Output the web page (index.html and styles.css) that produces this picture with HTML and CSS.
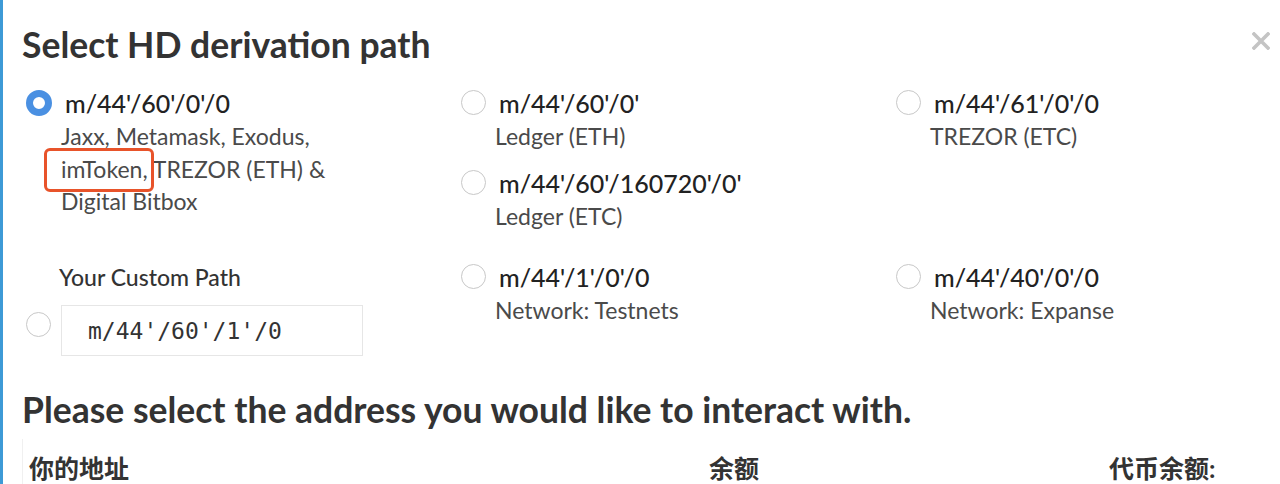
FILE: index.html
```html
<!DOCTYPE html>
<html lang="en">
<head>
    <meta charset="UTF-8">
    <meta name="viewport" content="width=device-width, initial-scale=1.0">
    <title>Select HD derivation path</title>
    <link rel="stylesheet" href="styles.css">
</head>
<body>
    <div class="modal">
        <div class="modal-head">
            <h2>Select HD derivation path</h2>
            <button class="close" aria-label="Close">
                <svg width="18" height="18" viewBox="0 0 18 18">
                    <path d="M2 2 L16 16 M16 2 L2 16" stroke="#c4c4c4" stroke-width="3.6" stroke-linecap="square"/>
                </svg>
            </button>
        </div>

        <div class="paths">
            <div class="cell">
                <label class="option">
                    <span class="radio checked"></span>
                    <span class="text">
                        <span class="path">m/44'/60'/0'/0</span>
                        <span class="desc">Jaxx, Metamask, Exodus, <span class="mark">imToken,</span> TREZOR (ETH) &amp; Digital Bitbox</span>
                    </span>
                </label>
            </div>
            <div class="cell">
                <label class="option">
                    <span class="radio"></span>
                    <span class="text">
                        <span class="path">m/44'/60'/0'</span>
                        <span class="desc">Ledger (ETH)</span>
                    </span>
                </label>
                <label class="option">
                    <span class="radio"></span>
                    <span class="text">
                        <span class="path">m/44'/60'/160720'/0'</span>
                        <span class="desc">Ledger (ETC)</span>
                    </span>
                </label>
            </div>
            <div class="cell">
                <label class="option">
                    <span class="radio"></span>
                    <span class="text">
                        <span class="path">m/44'/61'/0'/0</span>
                        <span class="desc">TREZOR (ETC)</span>
                    </span>
                </label>
            </div>

            <div class="cell custom">
                <div class="custom-label">Your Custom Path</div>
                <div class="custom-row">
                    <span class="radio"></span>
                    <input class="custom-input" type="text" value="m/44'/60'/1'/0">
                </div>
            </div>
            <div class="cell">
                <label class="option">
                    <span class="radio"></span>
                    <span class="text">
                        <span class="path">m/44'/1'/0'/0</span>
                        <span class="desc">Network: Testnets</span>
                    </span>
                </label>
            </div>
            <div class="cell">
                <label class="option">
                    <span class="radio"></span>
                    <span class="text">
                        <span class="path">m/44'/40'/0'/0</span>
                        <span class="desc">Network: Expanse</span>
                    </span>
                </label>
            </div>
        </div>

        <h2 class="sub">Please select the address you would like to interact with.</h2>

        <table class="addresses">
            <thead>
                <tr>
                    <th class="col-addr">你的地址</th>
                    <th class="col-bal">余额</th>
                    <th class="col-tok">代币余额:</th>
                </tr>
            </thead>
        </table>
    </div>
</body>
</html>
```

FILE: styles.css
```css
body {
    margin: 0;
    background: #ffffff;
    font-family: Lato, "Noto Sans CJK SC", sans-serif;
    color: #333333;
    overflow: hidden;
}

.modal {
    border-left: 3px solid #3d9ad6;
    padding: 20px 0 0 19px;
    height: 484px;
    box-sizing: border-box;
}

.modal-head {
    display: flex;
    justify-content: space-between;
    align-items: flex-start;
}

h2 {
    font-size: 35.5px;
    font-weight: 700;
    margin: 0;
    line-height: 50px;
    color: #333333;
}

.close {
    background: none;
    border: none;
    padding: 0;
    margin: 12px 10px 0 0;
    cursor: pointer;
}

.paths {
    display: grid;
    grid-template-columns: 435px 435px 380px;
    row-gap: 15px;
    margin-top: 17px;
    padding-left: 4px;
}

.option {
    display: flex;
    align-items: flex-start;
    gap: 9px;
    margin-bottom: 14px;
}

.radio {
    flex: none;
    width: 25px;
    height: 25px;
    border: 1px solid #c8c8c8;
    border-radius: 50%;
    margin-top: 3px;
    background: #ffffff;
    box-sizing: border-box;
}

.radio.checked {
    border: 7px solid #4a90e2;
    width: 26px;
    height: 26px;
}

.text {
    display: flex;
    flex-direction: column;
}

.path {
    font-size: 25px;
    font-weight: 500;
    color: #222222;
    line-height: 33px;
    padding-left: 4px;
}

.desc {
    font-size: 23px;
    font-weight: 400;
    color: #4a4a4a;
    line-height: 32.5px;
    max-width: 300px;
}

.mark {
    position: relative;
}

/* hand-drawn highlight box around imToken */
.mark::before {
    content: "";
    position: absolute;
    left: -17px;
    right: -6px;
    top: -7px;
    bottom: -9px;
    border: 3px solid #e8532a;
    border-radius: 6px;
}

.custom-label {
    font-size: 23px;
    font-weight: 500;
    color: #333333;
    line-height: 32px;
    padding-left: 33px;
}

.custom-row {
    display: flex;
    align-items: flex-start;
    gap: 10px;
    margin-top: 12px;
}

.custom-row .radio {
    margin-top: 7px;
}

.custom-input {
    width: 302px;
    height: 51px;
    box-sizing: border-box;
    border: 1px solid #e6e6e6;
    padding: 0 0 0 26px;
    font-family: "DejaVu Sans Mono", monospace;
    font-size: 23px;
    color: #333333;
    background: #ffffff;
}

.sub {
    margin-top: 29px;
}

.addresses {
    width: 1240px;
    table-layout: fixed;
    border-collapse: collapse;
    margin-top: 4px;
    border-left: 1px solid #f0f0f0;
}

.addresses th {
    font-size: 25px;
    font-weight: 700;
    text-align: left;
    padding: 10px 6px;
    color: #333333;
}

.col-addr { width: 668px; }
.col-bal { width: 388px; }
```
